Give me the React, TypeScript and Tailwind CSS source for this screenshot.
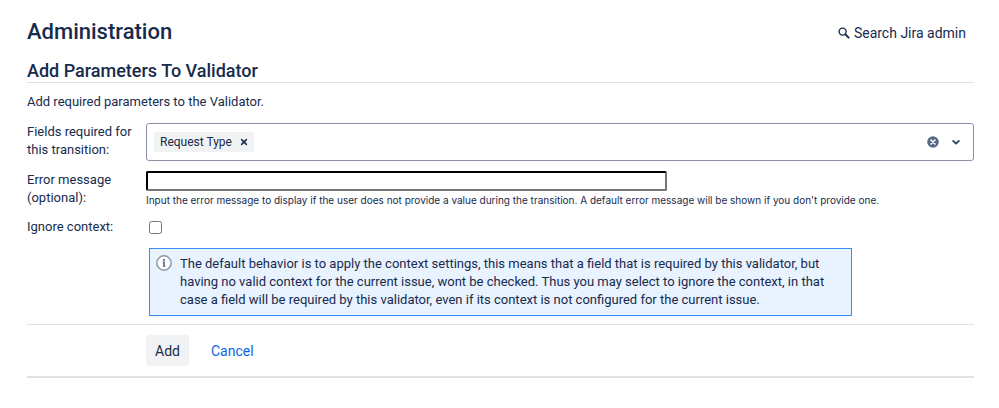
import { useState } from "react";
import type { FormEvent, ReactNode } from "react";

interface FormRowProps {
  label: string;
  htmlFor: string;
  children: ReactNode;
}

function SearchIcon() {
  return (
    <svg viewBox="0 0 12 12" className="size-3" fill="none" stroke="currentColor" aria-hidden="true">
      <circle cx="4.6" cy="4.6" r="3.5" strokeWidth="1.4" />
      <path d="M7.4 7.4L10.6 10.6" strokeWidth="2" strokeLinecap="round" />
    </svg>
  );
}

function CrossIcon() {
  return (
    <svg viewBox="0 0 8 8" className="size-2" fill="none" stroke="currentColor" aria-hidden="true">
      <path d="M1.6 1.6L6.4 6.4M6.4 1.6L1.6 6.4" strokeWidth="1.5" strokeLinecap="round" />
    </svg>
  );
}

function ClearIcon() {
  return (
    <svg viewBox="0 0 12 12" className="size-3" aria-hidden="true">
      <circle cx="6" cy="6" r="5.8" fill="#596a85" />
      <path d="M4 4L8 8M8 4L4 8" stroke="#fff" strokeWidth="1.6" strokeLinecap="round" />
    </svg>
  );
}

function ChevronIcon() {
  return (
    <svg viewBox="0 0 10 10" className="size-2.5" fill="none" stroke="#344563" aria-hidden="true">
      <path d="M2.1 3.9L5 6.5L7.9 3.9" strokeWidth="1.9" strokeLinecap="round" strokeLinejoin="round" />
    </svg>
  );
}

function InfoIcon() {
  return (
    <svg viewBox="0 0 16 16" className="size-4 shrink-0" aria-hidden="true">
      <circle cx="8" cy="8" r="7.2" fill="#fff" stroke="#8c98a8" strokeWidth="1.5" />
      <circle cx="8" cy="4.9" r="1.1" fill="#5e6c84" />
      <path d="M6.8 7.4H8.1V11.4" fill="none" stroke="#5e6c84" strokeWidth="1.6" />
      <path d="M6.8 11.2H9.4" stroke="#5e6c84" strokeWidth="1" />
    </svg>
  );
}

function FormRow({ label, htmlFor, children }: FormRowProps) {
  return (
    <div className="grid grid-cols-[119px_minmax(0,1fr)]">
      <label htmlFor={htmlFor} className="pr-2">
        {label}
      </label>
      <div>{children}</div>
    </div>
  );
}

export default function App() {
  const [fields, setFields] = useState<string[]>(["Request Type"]);
  const [errorMessage, setErrorMessage] = useState("");
  const [ignoreContext, setIgnoreContext] = useState(false);

  const removeField = (name: string) => {
    setFields((current) => current.filter((field) => field !== name));
  };

  const handleSubmit = (event: FormEvent) => {
    event.preventDefault();
  };

  return (
    <main className="bg-white pt-4 pr-[25px] pb-7 pl-[27px] font-[Roboto,sans-serif] text-[13px] leading-[18px] text-[#172b4d]">
      <header className="flex items-center justify-between pr-2">
        <h1 className="text-[22px] leading-8 font-medium">Administration</h1>
        <a href="#search" className="flex items-center gap-1 pt-0.5 text-sm">
          <SearchIcon />
          Search Jira admin
        </a>
      </header>

      <h2 className="mt-3 border-b border-[#dfe1e6] text-lg leading-[22px] font-medium">Add Parameters To Validator</h2>
      <p className="mt-2.5">Add required parameters to the Validator.</p>

      <form onSubmit={handleSubmit} className="mt-3">
        <div className="flex flex-col gap-2.5">
          <FormRow label="Fields required for this transition:" htmlFor="fields">
            <div className="flex h-[38px] items-center rounded-[3px] border border-[#8993a4] pr-3 pl-[7px]">
              {fields.map((field) => (
                <span key={field} className="flex h-5 items-center gap-2 rounded-xs bg-[#f1f2f4] px-1.5 text-xs">
                  {field}
                  <button type="button" aria-label={`Remove ${field}`} onClick={() => removeField(field)}>
                    <CrossIcon />
                  </button>
                </span>
              ))}
              <input id="fields" type="text" className="ml-1 min-w-0 flex-1 outline-none" />
              <button type="button" aria-label="Clear all fields" onClick={() => setFields([])}>
                <ClearIcon />
              </button>
              <button type="button" aria-label="Show fields" className="ml-3">
                <ChevronIcon />
              </button>
            </div>
          </FormRow>

          <FormRow label="Error message (optional):" htmlFor="error-message">
            <input
              id="error-message"
              type="text"
              value={errorMessage}
              onChange={(event) => setErrorMessage(event.target.value)}
              aria-describedby="error-message-help"
              className="block h-5 w-[521px] max-w-full rounded-xs border-2 border-t-black border-r-[#767676] border-b-[#767676] border-l-black px-1 outline-none"
            />
            <p id="error-message-help" className="mt-0.5 font-[Inter,sans-serif] text-[10px] leading-[15px]">
              Input the error message to display if the user does not provide a value during the transition. A default
              error message will be shown if you don't provide one.
            </p>
          </FormRow>

          <FormRow label="Ignore context:" htmlFor="ignore-context">
            <div className="pl-[3px]">
              <input
                id="ignore-context"
                type="checkbox"
                checked={ignoreContext}
                onChange={(event) => setIgnoreContext(event.target.checked)}
                className="mt-[3px] block size-[13px]"
              />
              <div className="mt-3.5 flex max-w-[703px] gap-2 border border-[#388bff] bg-[#e9f2ff] px-1.5 py-1.5">
                <InfoIcon />
                <p className="pr-3">
                  The default behavior is to apply the context settings, this means that a field that is required by this
                  validator, but having no valid context for the current issue, wont be checked. Thus you may select to
                  ignore the context, in that case a field will be required by this validator, even if its context is not
                  configured for the current issue.
                </p>
              </div>
            </div>
          </FormRow>
        </div>

        <div className="mt-2 flex items-center gap-[22px] border-t border-b-2 border-[#dfe1e6] py-2.5 pl-[119px] text-sm">
          <button type="submit" className="h-[31px] rounded-[3px] bg-[#f1f2f4] px-[9px]">
            Add
          </button>
          <a href="#cancel" className="text-[#0c66e4]">
            Cancel
          </a>
        </div>
      </form>
    </main>
  );
}
